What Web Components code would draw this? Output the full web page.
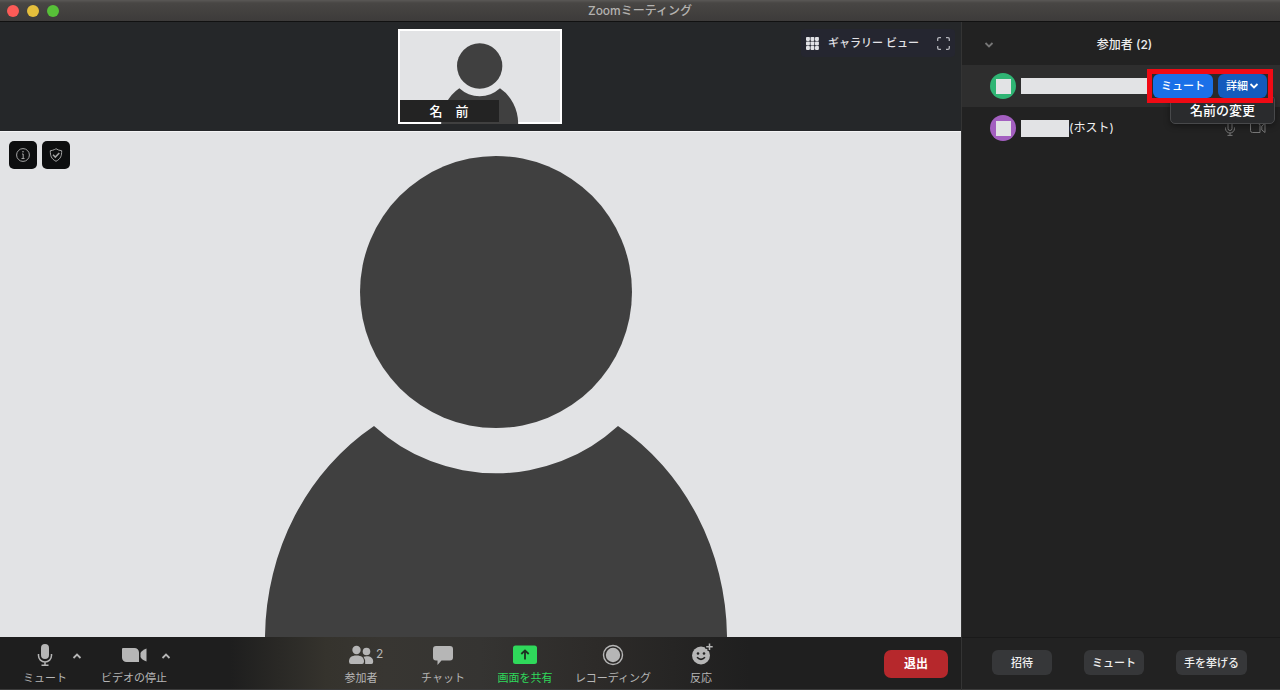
<!DOCTYPE html>
<html lang="ja">
<head>
<meta charset="utf-8">
<title>Zoomミーティング</title>
<style>
  html, body { margin: 0; height: 100%; }
  body { background: #222; font-family: Inter, "Noto Sans CJK JP", sans-serif; font-size: 11px; line-height: 14px; color: #ddd; }
</style>
</head>
<body>
<meeting-window></meeting-window>
<script>
const RESET = `
  *, *::before, *::after { box-sizing: border-box; }
  button { font: inherit; color: inherit; background: none; border: 0; padding: 0; margin: 0; white-space: nowrap; }
  svg { display: block; }
`;
function define(name, css, html) {
  customElements.define(name, class extends HTMLElement {
    constructor() {
      super();
      const t = document.createElement('template');
      t.innerHTML = `<style>${RESET}${css}</style>${typeof html === 'function' ? html(this) : html}`;
      this.attachShadow({ mode: 'open' }).append(t.content.cloneNode(true));
    }
  });
}

const ICONS = {
  mic: `<svg width="24" height="24" viewBox="0 0 24 24"><rect x="8" y="1" width="8" height="15" rx="4" fill="currentColor"/><path d="M5.5 11v1.500a6.500 6.500 0 0 0 13 0V11M12 19v3M8.500 22.200h7" fill="none" stroke="currentColor" stroke-width="1.500"/></svg>`,
  micLine: `<svg width="12" height="16" viewBox="0 0 12 16"><path d="M4 3.500a2 2 0 0 1 4 0v5a2 2 0 0 1-4 0zM1.500 7.500v1a4.500 4.500 0 0 0 9 0v-1M6 13v2.400M3.500 15.400h5" fill="none" stroke="currentColor"/></svg>`,
  camera: `<svg width="26" height="24" viewBox="0 0 26 24"><path d="M2 5h11.500a4.500 4.500 0 0 1 4.500 4.500V19H5.500A4.500 4.500 0 0 1 1 14.500V6a1 1 0 0 1 1-1z" fill="currentColor"/><path d="M25.500 5.500v13q-5-2-6-4.500v-4q1-2.500 6-4.500z" fill="currentColor"/></svg>`,
  cameraLine: `<svg width="17" height="12" viewBox="0 0 17 12"><path d="M1.500 1.500H9a2 2 0 0 1 2 2v7H3.500a2 2 0 0 1-2-2zM16 1.500v9L12.800 8V4z" fill="none" stroke="currentColor"/></svg>`,
  people: `<svg width="26" height="24" viewBox="0 0 26 24"><g fill="currentColor"><circle cx="8.500" cy="7" r="4.200"/><path d="M1 18.500c0-4 2.500-6 7.500-6s7.500 2 7.500 6q0 2.500-2 2.500H3q-2 0-2-2.500z"/><circle cx="18.500" cy="8.500" r="3.800"/><path d="M15.500 13.700q1.200-.4 3-.4c4.500 0 6.700 1.900 6.700 5.500q0 2.200-1.800 2.200h-6.200q.6-4.500-1.700-7.300z"/></g></svg>`,
  chat: `<svg width="24" height="24" viewBox="0 0 24 24"><path d="M5 3h14a3 3 0 0 1 3 3v8.500a3 3 0 0 1-3 3h-8.500L6.500 22v-4.500H5a3 3 0 0 1-3-3V6a3 3 0 0 1 3-3z" fill="currentColor"/></svg>`,
  share: `<svg width="24" height="24" viewBox="0 0 24 24"><rect y="2.500" width="24" height="18.500" rx="2.500" fill="currentColor"/><path d="M12 16.500V8M8.300 11L12 7.400l3.700 3.600" fill="none" stroke="#1e2e22" stroke-width="1.800"/></svg>`,
  record: `<svg width="24" height="24" viewBox="0 0 24 24"><circle cx="12" cy="12" r="9.500" fill="none" stroke="currentColor" stroke-width="1.400"/><circle cx="12" cy="12" r="7.200" fill="currentColor"/></svg>`,
  react: `<svg width="24" height="24" viewBox="0 0 24 24"><circle cx="12" cy="12.500" r="9" fill="currentColor"/><g fill="#222"><circle cx="9" cy="10.500" r="1.300"/><circle cx="15" cy="10.500" r="1.300"/></g><path d="M8 14.300q4 4 8 0" fill="none" stroke="#222" stroke-width="1.600"/><path d="M20.500 0v8M16.200 3.700h7.800" stroke="#222" stroke-width="4"/><path d="M20.500.5v6.500M17.200 3.700h6.500" stroke="currentColor" stroke-width="1.500"/></svg>`,
  up: `<svg width="10" height="6" viewBox="0 0 10 6"><path d="M1.500 5L5 1.600 8.500 5" fill="none" stroke="currentColor" stroke-width="1.800"/></svg>`,
  down: `<svg width="10" height="6" viewBox="0 0 10 6"><path d="M1.500 1L5 4.400 8.500 1" fill="none" stroke="currentColor" stroke-width="1.800"/></svg>`,
  grid: `<svg width="13" height="13" viewBox="0 0 13 13" fill="currentColor">${[0, 4.5, 9].map(y => [0, 4.5, 9].map(x => `<rect x="${x}" y="${y}" width="3.900" height="3.900" rx=".8"/>`).join('')).join('')}</svg>`,
  full: `<svg width="13" height="13" viewBox="0 0 13 13"><path d="M.7 4V2a1.300 1.300 0 0 1 1.300-1.300h2M9 .7h2A1.300 1.300 0 0 1 12.300 2v2M12.300 9v2a1.300 1.300 0 0 1-1.300 1.300H9M4 12.300H2A1.300 1.300 0 0 1 .7 11V9" fill="none" stroke="currentColor" stroke-width="1.300"/></svg>`,
  info: `<svg width="14" height="14" viewBox="0 0 14 14"><circle cx="7" cy="7" r="6.400" fill="none" stroke="currentColor"/><path d="M6 6h1.200v4.500M5.500 10.500h3" fill="none" stroke="currentColor"/><circle cx="7" cy="3.800" r=".8" fill="currentColor"/></svg>`,
  shield: `<svg width="14" height="14" viewBox="0 0 14 14"><path d="M7 .7q2.500 1.800 5.700 2c0 5-.8 8-5.700 10.600C2.100 10.700 1.300 7.700 1.300 2.700 4.500 2.500 7 .7 7 .7z" fill="none" stroke="currentColor"/><path d="M4 6.800l2.300 2.300L10.300 5" fill="none" stroke="currentColor" stroke-width="1.500"/></svg>`
};

define('person-silhouette', `
  :host { display: block; }
  svg { width: 100%; height: 100%; }
`, el => `<svg viewBox="${el.getAttribute('view')}" preserveAspectRatio="xMidYMax meet" fill="#404040" role="img" aria-label="参加者">
  <circle cx="496" cy="161" r="136"/>
  <path d="M265 520V505A231 251 0 0 1 374 295A181 181 0 0 0 618 295A231 251 0 0 1 727 505V520z"/>
</svg>`);

define('title-bar', `
  :host { display: grid; grid-template-columns: 1fr auto 1fr; align-items: center; height: 22px; padding: 0 7px;
    background: linear-gradient(#5a5856, #484644 3px, #3d3b3a); border-bottom: 1px solid #111; color: #b4b2b0; font-size: 12px; font-weight: 500; }
  div { display: flex; gap: 8px; }
  button { width: 12px; height: 12px; border-radius: 50%; background: var(--c); }
`, `<div><button style="--c:#fc5b57" aria-label="閉じる"></button><button style="--c:#e5bf3c" aria-label="しまう"></button><button style="--c:#57c038" aria-label="拡大"></button></div><span><slot></slot></span>`);

define('video-strip', `
  :host { display: grid; grid-template-columns: 1fr auto 1fr; align-items: start; height: 109px; padding: 7px 6px 0 4px; background: #252729; }
  .thumb { grid-column: 2; position: relative; width: 164px; height: 95px; background: #e2e3e5; box-shadow: inset 0 0 0 2px #fff; }
  person-silhouette { height: 95px; }
  .name { position: absolute; left: 2px; bottom: 2px; width: 99px; height: 22px; background: #232323; color: #fff; font-size: 13px; font-weight: 500; line-height: 22px; text-align: center; }
  .views { justify-self: end; display: flex; align-items: center; height: 28px; padding: 0 5px; border-radius: 4px; background: #252630; color: #e2e2e6; font-weight: 500; }
  .views button { display: flex; align-items: center; gap: 9px; }
  .views button + button { margin-left: 18px; color: #b4b5bb; }
`, `<div class="thumb"><person-silhouette view="6 -61 984 570"></person-silhouette><span class="name">名　前</span></div>
<div class="views"><button>${ICONS.grid}<span>ギャラリー ビュー</span></button><button aria-label="全画面">${ICONS.full}</button></div>`);

define('video-stage', `
  :host { display: block; position: relative; flex: 1; min-height: 0; background: #e2e3e5; border-top: 1px solid #f4f4f5; }
  person-silhouette { height: 100%; }
  .tips { position: absolute; left: 9px; top: 9px; display: flex; gap: 5px; }
  .tips button { display: grid; place-items: center; width: 28px; height: 28px; border-radius: 5px; background: #0d0e0f; color: #a4a4a4; }
`, `<person-silhouette view="0 1 961 505"></person-silhouette>
<div class="tips"><button aria-label="ミーティング情報">${ICONS.info}</button><button aria-label="セキュリティ">${ICONS.shield}</button></div>`);

define('tool-button', `
  :host { display: block; position: relative; width: 82px; color: #b6b6b6; }
  :host([wide]) { width: 94px; }
  :host([active]) { color: #2fd95b; }
  .main { display: flex; flex-direction: column; align-items: center; gap: 4px; width: 100%; }
  .icon { position: relative; }
  .count { position: absolute; left: 28px; top: 4px; font-size: 12px; }
  .more { position: absolute; right: 4px; top: 10px; }
`, el => {
  const count = el.getAttribute('count');
  return `<button class="main"><span class="icon">${ICONS[el.getAttribute('icon')]}${count ? `<span class="count">${count}</span>` : ''}</span><span><slot></slot></span></button>
  ${el.hasAttribute('menu') ? `<button class="more" aria-label="オプション">${ICONS.up}</button>` : ''}`;
});

define('meeting-toolbar', `
  :host { display: flex; justify-content: space-between; height: 53px; padding: 6px 13px 0 4px; border-bottom: 1px solid #3c3c3c;
    background: linear-gradient(90deg, #1e1e1e 24%, #35332d 34%, #383632 40%, #353432 50%, #2d2b29 62%, #1f1f1f 78%); }
  div { display: flex; }
  .left { gap: 7px; padding-right: 3px; }
  .leave { align-self: flex-start; width: 64px; height: 28px; margin-top: 7px; border-radius: 7px; background: #b6282c; color: #fff; font-size: 12px; font-weight: 700; }
`, `<div class="left"><tool-button icon="mic" menu>ミュート</tool-button><tool-button icon="camera" menu>ビデオの停止</tool-button></div>
<div><tool-button icon="people" count="2">参加者</tool-button><tool-button icon="chat">チャット</tool-button><tool-button icon="share" active>画面を共有</tool-button><tool-button icon="record" wide>レコーディング</tool-button><tool-button icon="react">反応</tool-button></div>
<button class="leave">退出</button>`);

define('participant-row', `
  :host { display: flex; align-items: center; height: 42px; padding: 0 7px 0 28px; font-size: 12px; color: #f0f0f0; }
  :host([selected]) { background: #2e2e2e; }
  .avatar { display: grid; place-items: center; width: 26px; height: 26px; margin-right: 5px; border-radius: 50%; background: var(--avatar); }
  .avatar::before { content: ""; width: 15px; height: 15px; background: #e2e3e5; }
  .mask { width: 48px; height: 17px; background: #e2e3e5; }
  :host([selected]) .mask { flex: 1; height: 16px; }
  .end { display: flex; align-items: center; margin-left: auto; }
  :host([selected]) .end { margin-left: 0; }
`, `<span class="avatar"></span><span class="mask"></span><slot></slot><span class="end"><slot name="actions"></slot></span>`);

define('row-actions', `
  :host { display: block; position: relative; font-size: 11px; font-weight: 500; }
  .frame { position: relative; z-index: 2; display: flex; gap: 5px; width: 126px; height: 34px; padding: 0 1px; border: 5px solid #f00a14; background: #2a2a2a; }
  .frame button { flex: 1 0 auto; border-radius: 6px; background: #1a70e8; color: #fff; }
  .frame .more { display: flex; align-items: center; justify-content: center; gap: 1px; flex: none; width: 49px; background: #145bbd; }
  .menu { position: absolute; z-index: 1; right: -2px; top: 26px; width: 105px; height: 29px; border: 1px solid #48494b; border-radius: 5px; background: #2a2b2d; box-shadow: 0 2px 6px #0006; display: flex; align-items: flex-end; justify-content: center; padding-bottom: 5px; }
  .menu button { font-size: 13px; line-height: 16px; color: #fff; }
`, `<div class="frame"><button>ミュート</button><button class="more">詳細${ICONS.down}</button></div><div class="menu"><button>名前の変更</button></div>`);

define('status-icons', `
  :host { display: flex; align-items: center; gap: 13px; margin-right: 7px; color: #777; }
`, `${ICONS.micLine}${ICONS.cameraLine}`);

define('participants-panel', `
  :host { display: flex; flex-direction: column; width: 319px; background: #222; border-left: 1px solid #343434; }
  header { display: grid; grid-template-columns: 1fr auto 1fr; align-items: center; height: 43px; padding: 2px 15px 0 22px; }
  header button { justify-self: start; color: #777; }
  h2 { margin: 0; font-size: 12px; font-weight: 500; color: #eee; }
  .list { flex: 1; }
  footer { display: flex; align-items: center; justify-content: center; gap: 32px; height: 53px; padding: 0 3px 2px 0; border-top: 1px solid #1a1a1a; border-bottom: 1px solid #3c3c3c; }
  footer button { min-width: 60px; height: 25px; padding: 0 8px; border-radius: 6px; background: #363739; color: #f0f0f0; font-weight: 500; }
`, `<header><button aria-label="閉じる">${ICONS.down}</button><h2>参加者 (2)</h2></header>
<div class="list">
  <participant-row selected style="--avatar:#2fb574"><row-actions slot="actions"></row-actions></participant-row>
  <participant-row style="--avatar:#a35fc0">(ホスト)<status-icons slot="actions"></status-icons></participant-row>
</div>
<footer><button>招待</button><button>ミュート</button><button>手を挙げる</button></footer>`);

define('meeting-window', `
  :host { display: flex; flex-direction: column; height: 100vh; }
  .body { display: flex; flex: 1; min-height: 0; }
  main { display: flex; flex-direction: column; flex: 1; min-width: 0; }
`, `<title-bar>Zoomミーティング</title-bar>
<div class="body"><main><video-strip></video-strip><video-stage></video-stage><meeting-toolbar></meeting-toolbar></main><participants-panel></participants-panel></div>`);
</script>
</body>
</html>
